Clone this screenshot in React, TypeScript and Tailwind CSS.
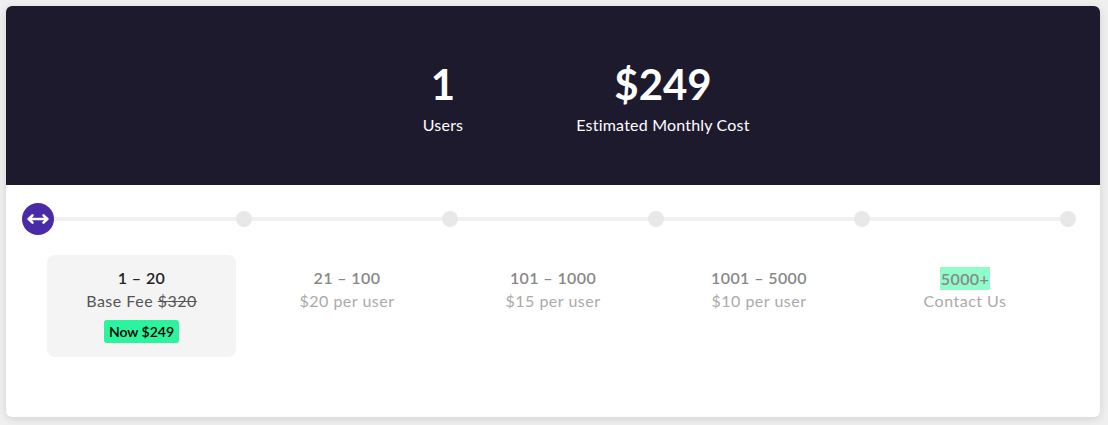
import React, { useState } from "react";
import { MoveHorizontal } from "lucide-react";

const tiers = [
  { range: "1 – 20", note: "Base Fee", old: "$320", now: "Now $249" },
  { range: "21 – 100", note: "$20 per user" },
  { range: "101 – 1000", note: "$15 per user" },
  { range: "1001 – 5000", note: "$10 per user" },
  { range: "5000+", note: "Contact Us", highlight: true },
];

const stops = [0, 1, 2, 3, 4, 5];

export default function App() {
  const [active] = useState(0);

  return (
    <div
      className="w-[1108px] h-[425px] bg-[#efefef] pl-[6px] pt-[6px]"
      style={{ fontFamily: "Lato, 'Noto Sans', sans-serif" }}
    >
      <div className="w-[1094px] h-[411px] bg-white rounded-md overflow-hidden shadow-[0_2px_8px_rgba(0,0,0,0.12)]">
        <div className="h-[179px] bg-[#1e1a2e] flex justify-center pt-[53px] text-white">
          <div className="w-[220px] flex flex-col items-center">
            <div className="text-[42px] leading-[50px] font-bold">1</div>
            <div className="text-[16px] leading-6 mt-[4px] tracking-[0.2px]">Users</div>
          </div>
          <div className="w-[220px] flex flex-col items-center">
            <div className="text-[42px] leading-[50px] font-bold">$249</div>
            <div className="text-[16px] leading-6 mt-[4px] tracking-[0.2px]">Estimated Monthly Cost</div>
          </div>
        </div>

        <div className="px-[32px]">
          <div className="relative h-[32px] mt-[18px] flex items-center justify-between">
            <div className="absolute left-0 right-0 top-[14px] h-[4px] bg-[#f1f1f1]" />
            {stops.map((s) => (
              <div key={s} className="relative w-0 flex justify-center">
                {s === active ? (
                  <div className="shrink-0 w-[32px] h-[32px] rounded-full bg-[#4b2aa8] flex items-center justify-center text-white">
                    <MoveHorizontal size={22} strokeWidth={2.8} />
                  </div>
                ) : (
                  <div className="shrink-0 w-[16px] h-[16px] rounded-full bg-[#e8e8e8]" />
                )}
              </div>
            ))}
          </div>

          <div className="grid grid-cols-5 mt-[20px]">
            {tiers.map((t, i) =>
              i === active ? (
                <div
                  key={t.range}
                  className="ml-[9px] mr-[8px] h-[102px] rounded-lg bg-[#f4f4f4] flex flex-col items-center pt-[13px]"
                >
                  <div className="text-[16px] leading-5 font-semibold tracking-[0.4px] text-[#222]">{t.range}</div>
                  <div className="text-[16px] leading-5 mt-[3px] tracking-[0.5px] text-[#555]">
                    {t.note} <span className="line-through">{t.old}</span>
                  </div>
                  <div className="mt-[9px] h-[23px] px-[5px] rounded-[3px] bg-[#2cf39d] text-[14px] leading-[23px] font-semibold text-black">
                    {t.now}
                  </div>
                </div>
              ) : (
                <div key={t.range} className="flex flex-col items-center pt-[13px]">
                  <div
                    className={
                      t.highlight
                        ? "text-[16px] leading-[23px] -my-[1.5px] px-[1px] font-semibold tracking-[0.4px] text-[#888] bg-[#8ffcca]"
                        : "text-[16px] leading-5 font-semibold tracking-[0.4px] text-[#888]"
                    }
                  >
                    {t.range}
                  </div>
                  <div className="text-[16px] leading-5 mt-[3px] tracking-[0.5px] text-[#aaa]">{t.note}</div>
                </div>
              )
            )}
          </div>
        </div>
      </div>
    </div>
  );
}
